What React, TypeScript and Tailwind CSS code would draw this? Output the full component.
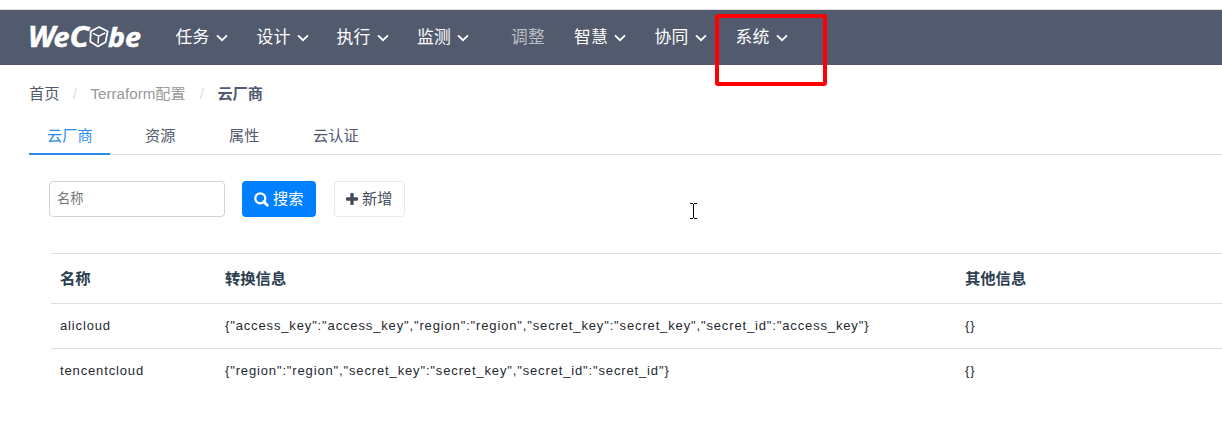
import React from "react";

type NavItem = { label: string; width: string; disabled?: boolean };

const navItems: NavItem[] = [
  { label: "任务", width: "w-[81px]" },
  { label: "设计", width: "w-[80px]" },
  { label: "执行", width: "w-[80.5px]" },
  { label: "监测", width: "w-[94px]" },
  { label: "调整", width: "w-[63px]", disabled: true },
  { label: "智慧", width: "w-[80.5px]" },
  { label: "协同", width: "w-[81px]" },
  { label: "系统", width: "w-[81px]" },
];

const rows = [
  {
    name: "alicloud",
    info: '{"access_key":"access_key","region":"region","secret_key":"secret_key","secret_id":"access_key"}',
    other: "{}",
  },
  {
    name: "tencentcloud",
    info: '{"region":"region","secret_key":"secret_key","secret_id":"secret_id"}',
    other: "{}",
  },
];

function Logo() {
  return (
    <svg
      width="124"
      height="54"
      viewBox="-6 0 124 54"
      className="-ml-[6px] block shrink-0 overflow-visible font-['Open_Sans','Noto_Sans',sans-serif] font-bold italic"
      fill="#fff"
      stroke="#fff"
      strokeWidth="0.5"
    >
      <text x="-1" y="35.5" fontSize="28" textLength="27" lengthAdjust="spacingAndGlyphs">W</text>
      <text x="24.5" y="35.5" fontSize="26" textLength="16" lengthAdjust="spacingAndGlyphs">e</text>
      <text x="40.5" y="35.5" fontSize="28" textLength="19.5" lengthAdjust="spacingAndGlyphs">C</text>
      <text x="79" y="35.5" fontSize="27" textLength="33" lengthAdjust="spacingAndGlyphs">be</text>
      <g fill="none" stroke="#fff" strokeWidth="1.8" strokeLinejoin="round">
        <path d="M70 16 L78.6 20.3 L76.6 31 L69 35.6 L61.3 30.8 L61.8 20.3 Z" />
        <path strokeWidth="1.5" d="M64 22.3 L69.6 25.2 L76.2 22 M69.6 25.2 L69 32.5" />
      </g>
    </svg>
  );
}

function Chevron() {
  return (
    <svg width="12" height="8" viewBox="0 0 12 8" className="ml-[6.6px] block" fill="none" stroke="#fff" strokeWidth="1.8">
      <path d="M1 1.3 L6 6.2 L11 1.3" />
    </svg>
  );
}

export default function App() {
  return (
    <div className="relative h-[439px] w-[1222px] overflow-hidden bg-white pt-[9px] font-['Liberation_Sans','Noto_Sans_CJK_SC',sans-serif] text-[15.2px] text-[#515a6e]">
      <header className="flex h-14 items-center border-t border-[#dcdee2] bg-[#525a6e] pl-[29px]">
        <Logo />
        <nav className="ml-[28.6px] flex">
          {navItems.map((item) => (
            <div
              key={item.label}
              className={`flex shrink-0 items-center text-[16.8px] leading-6 ${item.width} ${item.disabled ? "text-[#babdc5]" : "text-white"}`}
            >
              <span>{item.label}</span>
              {!item.disabled && <Chevron />}
            </div>
          ))}
        </nav>
      </header>

      <div className="flex h-[57px] items-center pl-[29px] leading-6">
        <span>首页</span>
        <span className="mx-[13.4px] text-[#dcdee2]">/</span>
        <span className="text-[#999]">Terraform配置</span>
        <span className="mr-[13.4px] ml-[14px] text-[#dcdee2]">/</span>
        <span className="font-bold">云厂商</span>
      </div>

      <div className="ml-[29px] flex h-[33px] border-b border-[#dcdee2] leading-[28px]">
        <div className="h-[33px] w-[81px] border-b-2 border-[#2d8cf0] pl-[18px] text-[#2d8cf0]">云厂商</div>
        <div className="ml-[35px] w-[84px]">资源</div>
        <div className="w-[84px]">属性</div>
        <div>云认证</div>
      </div>

      <div className="mt-[26px] ml-[49px] flex h-9">
        <input
          placeholder="名称"
          className="h-9 w-44 rounded-[4px] border border-[#ced4da] bg-white px-[7px] pb-[2px] text-[13.3px] outline-none placeholder:text-[#757575]"
        />
        <button className="ml-[17px] flex h-9 w-[74px] items-center rounded-[4px] bg-[#0080ff] pl-3 text-white">
          <svg width="15" height="15" viewBox="0 0 15 15" fill="none" stroke="#fff">
            <circle cx="6.3" cy="6.3" r="5" strokeWidth="2.3" />
            <path d="M9.8 9.8 L13.3 13.3" strokeWidth="2.8" strokeLinecap="round" />
          </svg>
          <span className="ml-1">搜索</span>
        </button>
        <button className="ml-[18px] flex h-9 w-[71px] items-center rounded-[4px] border border-[#e8eaec] pl-[11px] text-[#444b59]">
          <svg width="12" height="12" viewBox="0 0 12 12" fill="#444b59">
            <rect x="4.3" y="0" width="3.4" height="12" rx="0.7" />
            <rect x="0" y="4.3" width="12" height="3.4" rx="0.7" />
          </svg>
          <span className="ml-1">新增</span>
        </button>
      </div>

      <table className="mt-9 ml-[51px] w-[1300px] table-fixed border-collapse text-left text-[#24292f]">
        <colgroup>
          <col className="w-[165px]" />
          <col className="w-[740px]" />
          <col />
        </colgroup>
        <thead>
          <tr className="h-[50px] border-y border-[#dcdee2] text-[15.3px] text-[#2c3e50]">
            <th className="p-0 pt-[2px] pl-[9px]">名称</th>
            <th className="p-0 pt-[2px] pl-[9px]">转换信息</th>
            <th className="p-0 pt-[2px] pl-[9px]">其他信息</th>
          </tr>
        </thead>
        <tbody className="text-[13px] tracking-[0.855px]">
          {rows.map((row, index) => (
            <tr key={row.name} className={index === 0 ? "h-[45px] border-b border-[#dcdee2]" : "h-[43px]"}>
              <td className="p-0 pl-[9px]">{row.name}</td>
              <td className="p-0 pl-[9px] whitespace-nowrap">{row.info}</td>
              <td className="p-0 pl-[9px]">{row.other}</td>
            </tr>
          ))}
        </tbody>
      </table>

      <div className="pointer-events-none absolute top-[14px] left-[715px] h-[72px] w-[112px] rounded-[3px] border-4 border-[#ff0000]" />
      <svg className="pointer-events-none absolute top-[203px] left-[690px]" width="7" height="16" viewBox="0 0 7 16" shapeRendering="crispEdges" stroke="#000" fill="none">
        <path d="M0 .5 H3 M4 .5 H7 M3.5 1 V15 M0 15.5 H3 M4 15.5 H7" />
      </svg>
    </div>
  );
}
